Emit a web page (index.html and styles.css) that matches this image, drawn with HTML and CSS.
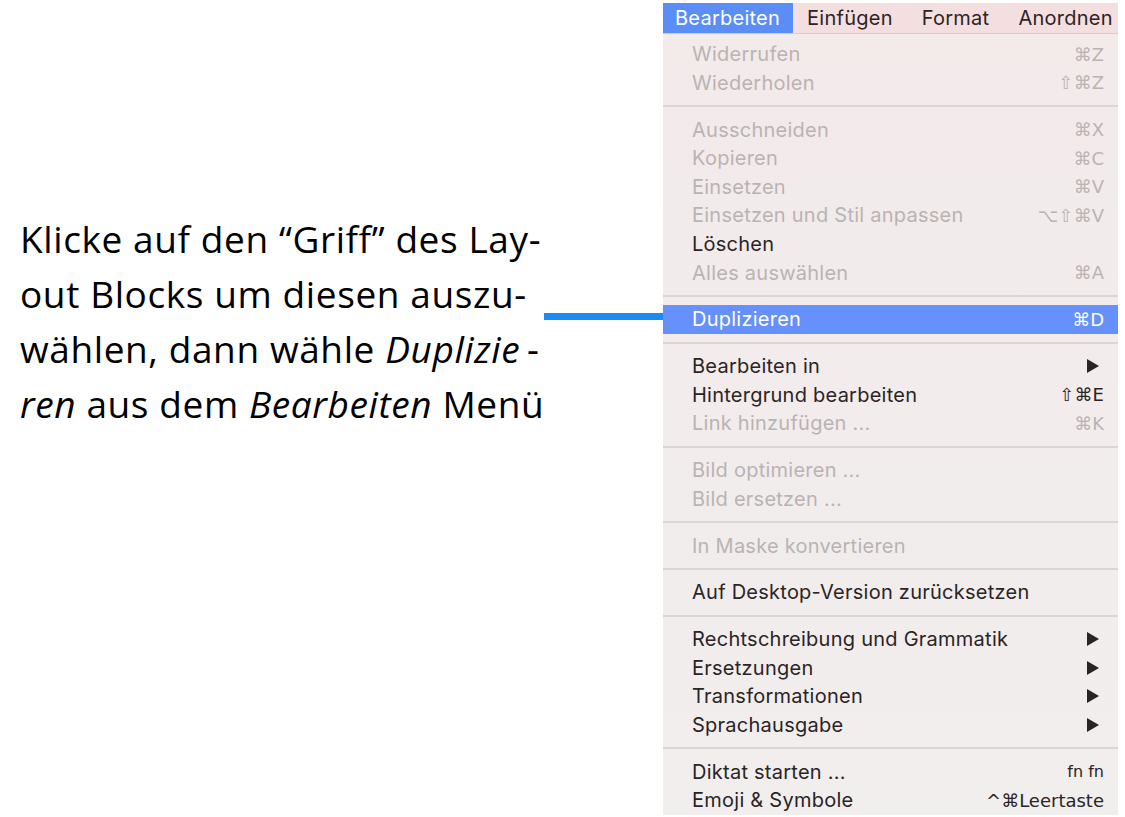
FILE: index.html
```html
<!DOCTYPE html>
<html lang="de">
<head>
    <meta charset="UTF-8">
    <meta name="viewport" content="width=device-width, initial-scale=1.0">
    <title>Duplizieren</title>
    <link rel="stylesheet" href="styles.css">
</head>
<body>
    <div class="page">
        <p class="hint">
            Klicke auf den “Griff” des Lay-<br>
            out Blocks um diesen auszu-<br>
            wählen, dann wähle <em>Duplizie</em>&thinsp;-<br>
            <em>ren</em> aus dem <em>Bearbeiten</em> Menü
        </p>

        <div class="connector"></div>

        <div class="menu">
            <div class="menubar">
                <span class="menubar-item active">Bearbeiten</span>
                <span class="menubar-item">Einfügen</span>
                <span class="menubar-item">Format</span>
                <span class="menubar-item">Anordnen</span>
            </div>

            <ul class="menu-list">
                <li class="item off"><span>Widerrufen</span><span class="key">⌘Z</span></li>
                <li class="item off"><span>Wiederholen</span><span class="key">⇧⌘Z</span></li>
                <li class="sep"></li>
                <li class="item off"><span>Ausschneiden</span><span class="key">⌘X</span></li>
                <li class="item off"><span>Kopieren</span><span class="key">⌘C</span></li>
                <li class="item off"><span>Einsetzen</span><span class="key">⌘V</span></li>
                <li class="item off"><span>Einsetzen und Stil anpassen</span><span class="key">⌥⇧⌘V</span></li>
                <li class="item"><span>Löschen</span></li>
                <li class="item off"><span>Alles auswählen</span><span class="key">⌘A</span></li>
                <li class="sep"></li>
                <li class="item selected"><span>Duplizieren</span><span class="key">⌘D</span></li>
                <li class="sep"></li>
                <li class="item"><span>Bearbeiten in</span><span class="arrow"></span></li>
                <li class="item"><span>Hintergrund bearbeiten</span><span class="key">⇧⌘E</span></li>
                <li class="item off"><span>Link hinzufügen ...</span><span class="key">⌘K</span></li>
                <li class="sep"></li>
                <li class="item off"><span>Bild optimieren ...</span></li>
                <li class="item off"><span>Bild ersetzen ...</span></li>
                <li class="sep"></li>
                <li class="item off"><span>In Maske konvertieren</span></li>
                <li class="sep"></li>
                <li class="item"><span>Auf Desktop-Version zurücksetzen</span></li>
                <li class="sep"></li>
                <li class="item"><span>Rechtschreibung und Grammatik</span><span class="arrow"></span></li>
                <li class="item"><span>Ersetzungen</span><span class="arrow"></span></li>
                <li class="item"><span>Transformationen</span><span class="arrow"></span></li>
                <li class="item"><span>Sprachausgabe</span><span class="arrow"></span></li>
                <li class="sep"></li>
                <li class="item"><span>Diktat starten ...</span><span class="key small">fn fn</span></li>
                <li class="item"><span>Emoji &amp; Symbole</span><span class="key">^⌘Leertaste</span></li>
            </ul>
        </div>
    </div>
</body>
</html>
```

FILE: styles.css
```css
body {
    margin: 0;
    background-color: #fff;
    color: #000;
}
.page {
    display: flex;
    align-items: flex-start;
    padding: 3px 0 0 20px;
}
.hint {
    margin: 208px 0 0 0;
    width: 524px;
    font-family: "Open Sans", "Noto Sans", sans-serif;
    font-size: 37px;
    line-height: 55px;
    letter-spacing: 0.6px;
    white-space: nowrap;
}
.hint em {
    font-style: italic;
}
.connector {
    width: 119px;
    height: 7px;
    margin-top: 310px;
    background-color: #1a8cf4;
}
.menu {
    width: 455px;
    font-family: Inter, "DejaVu Sans", sans-serif;
    font-size: 20px;
    letter-spacing: 0.25px;
    color: #2b2424;
    background: linear-gradient(to bottom, #f3eaea, #f1eeee);
}
.menubar {
    display: flex;
    height: 30px;
    background-color: #f4dfe0;
    border-bottom: 1px solid #d6cccc;
}
.menubar-item {
    padding: 0 15px 0 14px;
    line-height: 30px;
    color: #2b2424;
}
.menubar-item.active {
    padding: 0 13px 0 12px;
    background-color: #5a8df5;
    color: #fff;
}
.menu-list {
    list-style: none;
    margin: 0;
    padding: 6px 0 0 0;
}
.item {
    display: flex;
    justify-content: space-between;
    align-items: center;
    height: 28.6px;
    padding: 0 14px 0 29px;
}
.item.off {
    color: #bab3b3;
}
.item.selected {
    background-color: #6690fb;
    color: #fff;
}
.key {
    font-family: "DejaVu Sans", sans-serif;
    font-size: 18px;
    letter-spacing: 0;
}
.key.small {
    font-size: 16px;
}
.arrow {
    width: 0;
    height: 0;
    margin-right: 5px;
    border-top: 7px solid transparent;
    border-bottom: 7px solid transparent;
    border-left: 12px solid #2b2424;
}
.sep {
    height: 18.2px;
    display: flex;
    align-items: center;
}
.sep::before {
    content: "";
    flex: 1;
    height: 2px;
    background-color: #ddd5d5;
}
```
